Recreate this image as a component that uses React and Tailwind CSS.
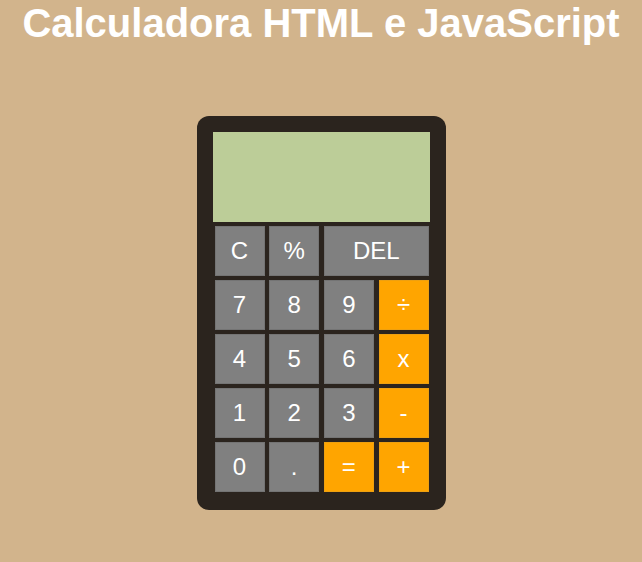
export default function App() {
  const btn = "h-[50px] flex items-center justify-center text-[24px] text-white border";
  const gray = `${btn} bg-[#808080] border-[#747474]`;
  const orange = `${btn} bg-[#ffa500] border-[#eea010]`;

  return (
    <div className="w-[642px] h-[562px] bg-[#d2b48c] font-['Liberation_Sans',Arial,sans-serif] flex flex-col items-center">
      <h1 className="text-[40px] leading-[46px] font-bold text-white text-center">Calculadora HTML e JavaScript</h1>
      <div className="mt-[70px] w-[249px] bg-[#2b241e] rounded-[12px] pt-4 pb-[18px] px-4">
        <div className="h-[90px] bg-[#bccd98]"></div>
        <div className="mt-[4px] ml-[2px] grid grid-cols-[50px_50px_50px_50px] gap-x-[4.7px] gap-y-[4px]">
          <div className={gray}>C</div>
          <div className={gray}>%</div>
          <div className={`${gray} col-span-2`}>DEL</div>
          <div className={gray}>7</div>
          <div className={gray}>8</div>
          <div className={gray}>9</div>
          <div className={orange}>÷</div>
          <div className={gray}>4</div>
          <div className={gray}>5</div>
          <div className={gray}>6</div>
          <div className={orange}>x</div>
          <div className={gray}>1</div>
          <div className={gray}>2</div>
          <div className={gray}>3</div>
          <div className={orange}>-</div>
          <div className={gray}>0</div>
          <div className={gray}>.</div>
          <div className={orange}>=</div>
          <div className={orange}>+</div>
        </div>
      </div>
    </div>
  );
}
